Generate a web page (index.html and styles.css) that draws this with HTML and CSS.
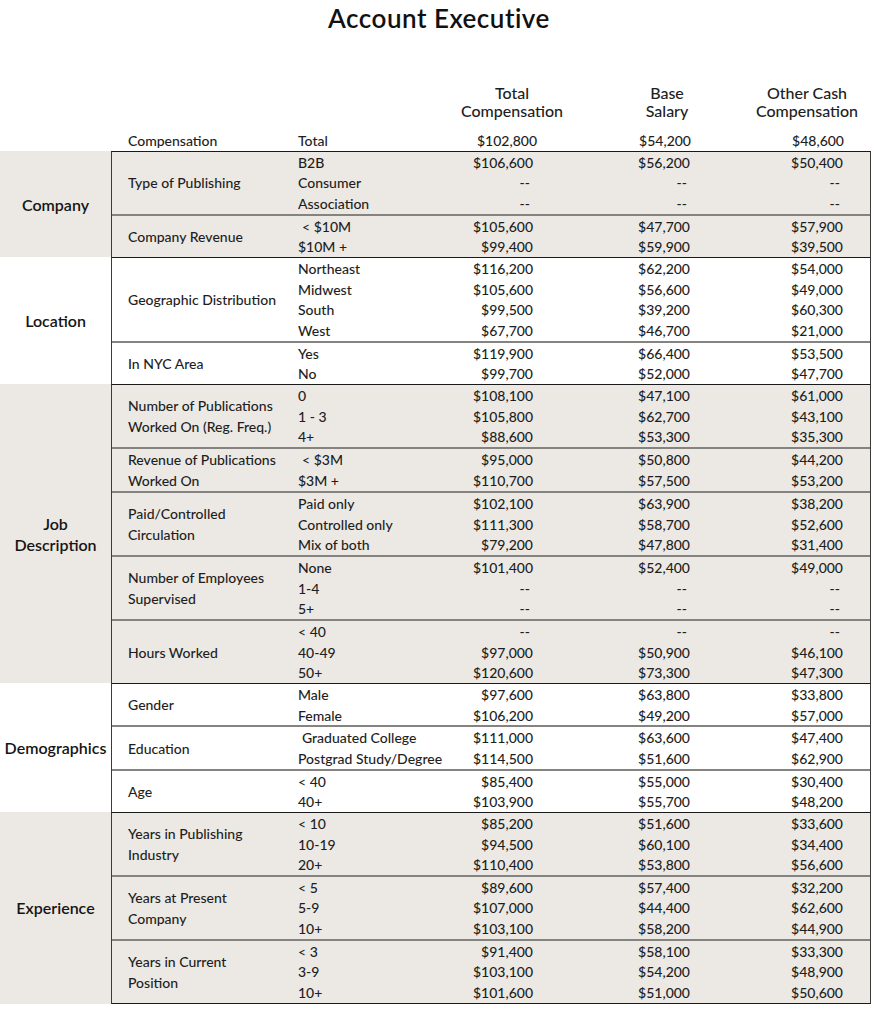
FILE: index.html
```html
<!DOCTYPE html>
<html lang="en">
<head>
<meta charset="utf-8">
<title>Account Executive</title>
<link rel="stylesheet" href="styles.css">
</head>
<body>
<h1 class="title">Account Executive</h1>

<div class="head">
  <div class="spacer"></div>
  <div class="h">Total<br>Compensation</div>
  <div class="h">Base<br>Salary</div>
  <div class="h">Other Cash<br>Compensation</div>
</div>

<div class="sec comp">
  <div class="cat"></div>
  <div class="box plain">
    <div class="grp">
      <div class="sub">Compensation</div>
      <div class="rows">
        <div class="row"><span>Total</span><span class="v">$102,800</span><span class="v">$54,200</span><span class="v">$48,600</span></div>
      </div>
    </div>
  </div>
</div>

<div class="sec shade">
  <div class="cat">Company</div>
  <div class="box">
    <div class="grp">
      <div class="sub">Type of Publishing</div>
      <div class="rows">
        <div class="row"><span>B2B</span><span class="v">$106,600</span><span class="v">$56,200</span><span class="v">$50,400</span></div>
        <div class="row"><span>Consumer</span><span class="v d">--</span><span class="v d">--</span><span class="v d">--</span></div>
        <div class="row"><span>Association</span><span class="v d">--</span><span class="v d">--</span><span class="v d">--</span></div>
      </div>
    </div>
    <div class="grp">
      <div class="sub">Company Revenue</div>
      <div class="rows">
        <div class="row"><span class="ind">&lt; $10M</span><span class="v">$105,600</span><span class="v">$47,700</span><span class="v">$57,900</span></div>
        <div class="row"><span>$10M +</span><span class="v">$99,400</span><span class="v">$59,900</span><span class="v">$39,500</span></div>
      </div>
    </div>
  </div>
</div>

<div class="sec">
  <div class="cat">Location</div>
  <div class="box">
    <div class="grp">
      <div class="sub">Geographic Distribution</div>
      <div class="rows">
        <div class="row"><span>Northeast</span><span class="v">$116,200</span><span class="v">$62,200</span><span class="v">$54,000</span></div>
        <div class="row"><span>Midwest</span><span class="v">$105,600</span><span class="v">$56,600</span><span class="v">$49,000</span></div>
        <div class="row"><span>South</span><span class="v">$99,500</span><span class="v">$39,200</span><span class="v">$60,300</span></div>
        <div class="row"><span>West</span><span class="v">$67,700</span><span class="v">$46,700</span><span class="v">$21,000</span></div>
      </div>
    </div>
    <div class="grp">
      <div class="sub">In NYC Area</div>
      <div class="rows">
        <div class="row"><span>Yes</span><span class="v">$119,900</span><span class="v">$66,400</span><span class="v">$53,500</span></div>
        <div class="row"><span>No</span><span class="v">$99,700</span><span class="v">$52,000</span><span class="v">$47,700</span></div>
      </div>
    </div>
  </div>
</div>

<div class="sec shade">
  <div class="cat">Job<br>Description</div>
  <div class="box">
    <div class="grp">
      <div class="sub">Number of Publications<br>Worked On (Reg. Freq.)</div>
      <div class="rows">
        <div class="row"><span>0</span><span class="v">$108,100</span><span class="v">$47,100</span><span class="v">$61,000</span></div>
        <div class="row"><span>1 - 3</span><span class="v">$105,800</span><span class="v">$62,700</span><span class="v">$43,100</span></div>
        <div class="row"><span>4+</span><span class="v">$88,600</span><span class="v">$53,300</span><span class="v">$35,300</span></div>
      </div>
    </div>
    <div class="grp">
      <div class="sub">Revenue of Publications<br>Worked On</div>
      <div class="rows">
        <div class="row"><span class="ind">&lt; $3M</span><span class="v">$95,000</span><span class="v">$50,800</span><span class="v">$44,200</span></div>
        <div class="row"><span>$3M +</span><span class="v">$110,700</span><span class="v">$57,500</span><span class="v">$53,200</span></div>
      </div>
    </div>
    <div class="grp">
      <div class="sub">Paid/Controlled<br>Circulation</div>
      <div class="rows">
        <div class="row"><span>Paid only</span><span class="v">$102,100</span><span class="v">$63,900</span><span class="v">$38,200</span></div>
        <div class="row"><span>Controlled only</span><span class="v">$111,300</span><span class="v">$58,700</span><span class="v">$52,600</span></div>
        <div class="row"><span>Mix of both</span><span class="v">$79,200</span><span class="v">$47,800</span><span class="v">$31,400</span></div>
      </div>
    </div>
    <div class="grp">
      <div class="sub">Number of Employees<br>Supervised</div>
      <div class="rows">
        <div class="row"><span>None</span><span class="v">$101,400</span><span class="v">$52,400</span><span class="v">$49,000</span></div>
        <div class="row"><span>1-4</span><span class="v d">--</span><span class="v d">--</span><span class="v d">--</span></div>
        <div class="row"><span>5+</span><span class="v d">--</span><span class="v d">--</span><span class="v d">--</span></div>
      </div>
    </div>
    <div class="grp">
      <div class="sub">Hours Worked</div>
      <div class="rows">
        <div class="row"><span>&lt; 40</span><span class="v d">--</span><span class="v d">--</span><span class="v d">--</span></div>
        <div class="row"><span>40-49</span><span class="v">$97,000</span><span class="v">$50,900</span><span class="v">$46,100</span></div>
        <div class="row"><span>50+</span><span class="v">$120,600</span><span class="v">$73,300</span><span class="v">$47,300</span></div>
      </div>
    </div>
  </div>
</div>

<div class="sec">
  <div class="cat">Demographics</div>
  <div class="box">
    <div class="grp">
      <div class="sub">Gender</div>
      <div class="rows">
        <div class="row"><span>Male</span><span class="v">$97,600</span><span class="v">$63,800</span><span class="v">$33,800</span></div>
        <div class="row"><span>Female</span><span class="v">$106,200</span><span class="v">$49,200</span><span class="v">$57,000</span></div>
      </div>
    </div>
    <div class="grp">
      <div class="sub">Education</div>
      <div class="rows">
        <div class="row"><span class="ind">Graduated College</span><span class="v">$111,000</span><span class="v">$63,600</span><span class="v">$47,400</span></div>
        <div class="row"><span>Postgrad Study/Degree</span><span class="v">$114,500</span><span class="v">$51,600</span><span class="v">$62,900</span></div>
      </div>
    </div>
    <div class="grp">
      <div class="sub">Age</div>
      <div class="rows">
        <div class="row"><span>&lt; 40</span><span class="v">$85,400</span><span class="v">$55,000</span><span class="v">$30,400</span></div>
        <div class="row"><span>40+</span><span class="v">$103,900</span><span class="v">$55,700</span><span class="v">$48,200</span></div>
      </div>
    </div>
  </div>
</div>

<div class="sec shade last">
  <div class="cat">Experience</div>
  <div class="box">
    <div class="grp">
      <div class="sub">Years in Publishing<br>Industry</div>
      <div class="rows">
        <div class="row"><span>&lt; 10</span><span class="v">$85,200</span><span class="v">$51,600</span><span class="v">$33,600</span></div>
        <div class="row"><span>10-19</span><span class="v">$94,500</span><span class="v">$60,100</span><span class="v">$34,400</span></div>
        <div class="row"><span>20+</span><span class="v">$110,400</span><span class="v">$53,800</span><span class="v">$56,600</span></div>
      </div>
    </div>
    <div class="grp">
      <div class="sub">Years at Present<br>Company</div>
      <div class="rows">
        <div class="row"><span>&lt; 5</span><span class="v">$89,600</span><span class="v">$57,400</span><span class="v">$32,200</span></div>
        <div class="row"><span>5-9</span><span class="v">$107,000</span><span class="v">$44,400</span><span class="v">$62,600</span></div>
        <div class="row"><span>10+</span><span class="v">$103,100</span><span class="v">$58,200</span><span class="v">$44,900</span></div>
      </div>
    </div>
    <div class="grp">
      <div class="sub">Years in Current<br>Position</div>
      <div class="rows">
        <div class="row"><span>&lt; 3</span><span class="v">$91,400</span><span class="v">$58,100</span><span class="v">$33,300</span></div>
        <div class="row"><span>3-9</span><span class="v">$103,100</span><span class="v">$54,200</span><span class="v">$48,900</span></div>
        <div class="row"><span>10+</span><span class="v">$101,600</span><span class="v">$51,000</span><span class="v">$50,600</span></div>
      </div>
    </div>
  </div>
</div>
</body>
</html>
```

FILE: styles.css
```css
* { box-sizing: border-box; }

body {
  margin: 0;
  width: 878px;
  background: #ffffff;
  font-family: Lato, "Noto Sans", sans-serif;
  color: #1e1e1e;
}

.title {
  margin: 3px 0 0;
  height: 30px;
  line-height: 30px;
  text-align: center;
  font-size: 26px;
  letter-spacing: 0.5px;
  font-weight: 600;
  color: #111;
}

.head {
  display: grid;
  grid-template-columns: 440px 144px 166px 114px;
  margin-top: 51px;
  font-size: 16px;
  line-height: 18px;
  font-weight: 500;
  color: #1e1e1e;
}

.head .h { text-align: center; }

.comp { margin-top: 9px; }

.sec {
  display: flex;
  width: 871px;
}

.sec.shade { background: #ece9e4; }

.cat {
  width: 111px;
  flex: none;
  display: flex;
  align-items: center;
  justify-content: center;
  text-align: center;
  font-size: 16px;
  line-height: 21px;
  font-weight: 600;
  color: #151515;
}

.box {
  width: 760px;
  flex: none;
  border-left: 1px solid #3a3a3a;
  border-right: 1px solid #3a3a3a;
  border-top: 1px solid #1a1a1a;
}

.box.plain { border-color: transparent; }

.sec.last .box { border-bottom: 1px solid #1a1a1a; }

.grp { display: flex; }

.grp + .grp { border-top: 2px solid #858380; }

.sub {
  width: 186px;
  flex: none;
  padding-left: 16px;
  display: flex;
  align-items: center;
  font-size: 14px;
  line-height: 21px;
  font-weight: 500;
}

.rows { flex: 1; }

.row {
  display: grid;
  grid-template-columns: 152px 83px 157px 153px;
  height: 20.66px;
  align-items: center;
  font-size: 14px;
  font-weight: 500;
  white-space: nowrap;
}

.comp .row { grid-template-columns: 152px 87px 154px 153px; }

.row .v { text-align: right; }
.row .d { padding-right: 3px; }
.row .ind { padding-left: 4px; }
```
